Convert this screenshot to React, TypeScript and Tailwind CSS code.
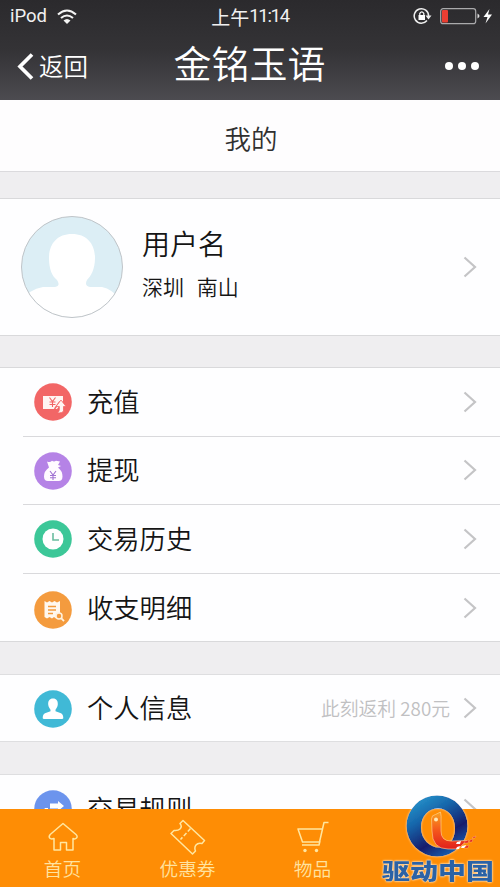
import type { ReactNode } from 'react';

const Chevron = () => (
  <svg className="mr-[23px] shrink-0" width="14" height="22" viewBox="0 0 14 22" fill="none" stroke="#c4c4c6" strokeWidth="2.2">
    <path d="M1.5 1.5 12 11 1.5 20.5" />
  </svg>
);

const Recharge = () => (
  <svg width="38" height="38" viewBox="0 0 38 38">
    <circle cx="19" cy="19" r="18.8" fill="#f26666" />
    <path d="M9 13h20v5l-6 8H9z" fill="#fff5f3" />
    <path d="m15.5 14.500 3 4 3-4M18.500 18.500V24M15.500 19h6M15.500 21.500h6" stroke="#f26666" strokeWidth="1.100" fill="none" />
    <path d="M20.500 26 26 18.500" stroke="#f26666" strokeWidth="1.400" />
    <path d="m27 17 5 6.500h-2.500V28q-1 2.300-6.500 1.800 2.500-1 2.300-3v-3.300H22z" fill="#fff5f3" stroke="#f26666" strokeWidth="0.800" />
  </svg>
);

const MoneyBag = () => (
  <svg width="38" height="38" viewBox="0 0 38 38">
    <circle cx="19" cy="19" r="18.800" fill="#b583e6" />
    <path d="M13 9.500q3 1.500 5-.8 2 1.600 4 0l4 .8-2 3.500 3 1-3 1.500q4.500 3.500 4.500 9 0 4.500-4 4.500H14q-4 0-4-4.500 0-5.500 5-9z" fill="#fffaff" />
    <path d="m16 19 3 4 3-4M19 23v5M16 23.500h6M16 25.700h6" stroke="#a273d3" strokeWidth="1.100" fill="none" />
  </svg>
);

const History = () => (
  <svg width="38" height="38" viewBox="0 0 38 38">
    <circle cx="19" cy="19" r="18.800" fill="#3cc798" />
    <circle cx="19" cy="19" r="10.500" fill="#fff" />
    <path d="M19 13v7h6" stroke="#6bbda0" strokeWidth="1.600" fill="none" />
  </svg>
);

const Receipt = () => (
  <svg width="38" height="38" viewBox="0 0 38 38">
    <circle cx="19" cy="19" r="18.800" fill="#f49b3e" />
    <path d="m10.500 10 2.500 1.500L15.500 10l2.500 1.500 2.500-1.500 2.500 1.500 3-1.500v13.500l-4 4-2-1.500-2 1.500-2.500-1.500-2.500 1.500-2.500-1.500z" fill="#fff8ef" />
    <path d="M14 15.500h8M14 19h8M14 22.500h5" stroke="#f49b3e" strokeWidth="1.300" />
    <circle cx="25" cy="25" r="3" fill="#f49b3e" stroke="#fff2df" strokeWidth="1.500" />
    <path d="m27.200 27.200 2.800 3" stroke="#fff2df" strokeWidth="1.800" />
  </svg>
);

const Person = () => (
  <svg width="38" height="38" viewBox="0 0 38 38">
    <circle cx="19" cy="19" r="18.800" fill="#40b9d6" />
    <path d="M19 8.500c3.500 0 5 2.500 4.800 6-.2 2.500-1.500 4-2.300 5.200v1.500l5.500 2q2.300 1 2.300 5-.3.800-1.300.8H10q-1 0-1.300-.8 0-4 2.300-5l5.500-2v-1.500c-.8-1.200-2.100-2.700-2.300-5.200-.2-3.500 1.300-6 4.800-6z" fill="#fff" />
  </svg>
);

const Rules = () => (
  <svg width="38" height="38" viewBox="0 0 38 38">
    <circle cx="19" cy="19" r="18.800" fill="#6c94ed" />
    <path d="M16 13.500h8V11l6 5-6 5v-2.500h-8zM11 18h3v2.500h8V25h-8v2.500l-6-5z" fill="#fff" />
  </svg>
);

function Row({ icon, label, note, offset = '' }: { icon: ReactNode; label: string; note?: string; offset?: string }) {
  return (
    <div className="flex h-full items-center">
      <span className={`w-[38px] shrink-0 ${offset}`}>{icon}</span>
      <span className="ml-[15px] flex-1 pb-[2px] text-[26.300px] leading-[38px] text-[#151515]">{label}</span>
      {note && <span className="mr-[13px] text-[18.800px] leading-none text-[#c0c0c2]">{note}</span>}
      <Chevron />
    </div>
  );
}

const actions = [
  { label: '充值', icon: <Recharge />, offset: '' },
  { label: '提现', icon: <MoneyBag />, offset: 'pt-px' },
  { label: '交易历史', icon: <History />, offset: 'pt-px' },
  { label: '收支明细', icon: <Receipt />, offset: 'pt-1' },
];

const Home = () => (
  <svg width="32" height="30" viewBox="0 0 32 30" fill="none" stroke="#ffe6a0" strokeWidth="1.500" strokeLinejoin="round">
    <path d="M16 1.500 29 12.500q2 2 .5 3.500-1.500 1.500-3.500.5V28h-6.500v-7.500h-6V28H7V16.500q-3 1-4.300-.5-1.200-1.500.5-3.500z" />
  </svg>
);

const Ticket = () => (
  <svg width="36" height="36" viewBox="0 0 36 36" fill="none" stroke="#ffe6a0" strokeWidth="1.500" strokeLinejoin="round">
    <path d="m13 1.500 21.500 20-2.500 3q-4-1-6 1.500-2 2.500-.5 6l-3 3L1 14.500l3-3q4 .5 6-1.500Q12.500 7.500 10 4.500z" />
    <path d="m20.500 9.500-10 11" strokeDasharray="4 2" />
  </svg>
);

const Cart = () => (
  <svg width="34" height="34" viewBox="0 0 34 34" fill="none" stroke="#ffe6a0" strokeWidth="1.500">
    <path d="M32.500 2.500h-4.500l-4.500 19.500H6.500L2 9h24.500M6 25h17l1-4" strokeLinejoin="round" />
    <circle cx="9" cy="30.500" r="1.700" fill="#ffe6a0" stroke="none" />
    <circle cx="20.500" cy="30.500" r="1.700" fill="#ffe6a0" stroke="none" />
  </svg>
);

const tabs = [
  { label: '首页', icon: <Home /> },
  { label: '优惠券', icon: <Ticket /> },
  { label: '物品', icon: <Cart /> },
];

function Brand() {
  return (
    <div className="absolute right-0 bottom-0 h-[96px] w-[124px]">
      <svg width="124" height="96" viewBox="376 791 124 96">
        <defs>
          <linearGradient id="ring" x1="0" y1="0" x2="0.600" y2="1">
            <stop offset="0" stopColor="#2aa3d6" />
            <stop offset="0.400" stopColor="#1766ab" />
            <stop offset="0.750" stopColor="#151d6c" />
            <stop offset="1" stopColor="#1658a8" />
          </linearGradient>
          <linearGradient id="bird" x1="0" y1="0" x2="0" y2="1">
            <stop offset="0" stopColor="#f9a321" />
            <stop offset="0.500" stopColor="#f4561c" />
            <stop offset="1" stopColor="#e1201c" />
          </linearGradient>
          <filter id="glow" x="-20%" y="-20%" width="140%" height="140%">
            <feDropShadow dx="0" dy="0" stdDeviation="1.300" floodColor="#fff" floodOpacity="0.700" />
          </filter>
        </defs>
        <path filter="url(#glow)" fillRule="evenodd" d="M437 795.500a30.500 30.500 0 1 0 .1 61 30.500 30.500 0 0 0-.1-61zm1 13c10 0 17 8 17 20s-7 19-16 19-18-8-18-20 8-19 17-19z" fill="url(#ring)" />
        <path d="M431.500 819q0-4 4-4.500l5-2.500q1 4 .5 9v10q0 10 10 10l16-.5-9 8.500H448q-16 0-16-18z" fill="url(#bird)" stroke="#ffd9a0" strokeWidth="0.600" />
        <circle cx="436" cy="819.500" r="2" fill="#ffe8b5" />
        <path d="m457 842 4-1-1 3h-4zm5 4 4-1-1 3h-4zm-5 1 3-1-1 3h-3z" fill="#fff" />
        <path d="m465 841 4-1-1 3h-4zm5-1 3-1-1 3h-3zm3-3 3-1-1 2h-3zm-7 9 3-1-1 3h-4z" fill="#e62c1d" stroke="#ffd9b0" strokeWidth="0.300" />
      </svg>
      <span className="absolute top-[69px] left-[6px] origin-top scale-y-[0.760] whitespace-nowrap text-[28px] leading-[26px] font-black text-[#2b62a5] [text-shadow:0_0_2px_#fff,0_0_3px_#ffe4bd]">驱动中国</span>
    </div>
  );
}

export default function App() {
  return (
    <div className="relative flex h-[887px] w-[500px] flex-col overflow-hidden bg-[#efeef0] font-['Noto_Sans_CJK_SC',sans-serif] font-[350] whitespace-nowrap">
      <header className="h-[100px] shrink-0 bg-linear-to-b from-[#2b2a2d] via-[#343336] to-[#4c4b50] text-white">
        <div className="grid h-8 grid-cols-3 items-center px-[10px] text-[#f1f1f1]">
          <div className="flex items-center gap-[10px]">
            <span className="font-[Roboto,sans-serif] text-[18.500px] leading-none font-normal">iPod</span>
            <svg width="20" height="15" viewBox="0 0 20 15" fill="none" stroke="#f4f4f4" strokeWidth="2.100">
              <path d="M1 5.500Q10-2.500 19 5.500M4 9q6-5 12 0" />
              <path d="M6.500 11.500q3.500-3 7 0L10 15z" fill="#f4f4f4" stroke="none" />
            </svg>
          </div>
          <div className="flex items-center justify-center text-[19px] leading-none font-normal">上午<span className="font-[Roboto,sans-serif] text-[18.500px] tracking-[-1.300px]">11:14</span></div>
          <div className="flex items-center justify-end">
            <svg className="-mr-[3px]" width="80" height="20" viewBox="0 0 80 20" fill="none">
              <path d="M14 14.500a7.200 7.200 0 1 1 1.600-4.500" stroke="#eee" strokeWidth="1.500" />
              <path d="M12.500 9.500h6l-3 4z" fill="#eee" />
              <rect x="5.500" y="9" width="6.500" height="5" fill="#fff" />
              <path d="M6.800 9V7.300q2-3 4 0V9" stroke="#fff" strokeWidth="1.200" />
              <rect x="27.700" y="2.700" width="35" height="15" rx="2.500" stroke="#aaaaac" strokeWidth="1.200" />
              <rect x="29" y="4" width="6" height="12.500" rx="1" fill="#e93e32" />
              <path d="M64.500 7.500q4 2.500 0 5z" fill="#ddd" />
              <path d="m76.500 3-6 8h4l-2 6.500 6.500-9h-4z" fill="#fff" />
            </svg>
          </div>
        </div>
        <div className="grid h-[68px] grid-cols-3 pr-[21px] pl-[17px]">
          <div className="flex items-center gap-[5px] text-[24.500px]">
            <svg width="17" height="27" viewBox="0 0 17 27" fill="none" stroke="#fff" strokeWidth="3.700"><path d="M15 1.500 3 13.500l12 12" /></svg>
            <span className="leading-none">返回</span>
          </div>
          <h1 className="flex h-[60px] items-center justify-center pl-[3px] text-[38px] leading-none font-[350]">金铭玉语</h1>
          <div className="flex items-center justify-end gap-[5px]">
            <i className="size-2 rounded-full bg-white" /><i className="size-2 rounded-full bg-white" /><i className="size-2 rounded-full bg-white" />
          </div>
        </div>
      </header>
      <h2 className="flex h-[72px] shrink-0 items-center justify-center border-b border-[#dbdadd] bg-[#fefdfe] pt-[5px] pl-[2px] text-[26.500px] leading-none font-[350] text-[#303030]">我的</h2>
      <section className="mt-[26px] flex h-[138px] shrink-0 items-center border-y border-[#d9d9db] bg-[#fefeff] pl-[21px]">
        <svg width="102" height="102" viewBox="0 0 102 102">
          <defs><clipPath id="avatar"><circle cx="51" cy="51" r="50.500" /></clipPath></defs>
          <circle cx="51" cy="51" r="50.500" fill="#dceef5" />
          <path clipPath="url(#avatar)" d="M51 18c15 0 23 10 23 24 0 11-4 18-8 22q-3 6 3 7h12q10 2 19 13v18H0V86q8-13 22-15h12q6-1 2-7c-5-4-8-11-8-22 0-14 8-24 23-24z" fill="#fff" />
          <circle cx="51" cy="51" r="50.500" fill="none" stroke="#bfc4c8" />
        </svg>
        <div className="mb-[8px] ml-[19px] flex flex-1 flex-col gap-[19px] text-[#151515]">
          <span className="text-[28px] leading-[28px]">用户名</span>
          <span className="text-[21px] leading-[21px] [word-spacing:8px]">深圳 南山</span>
        </div>
        <Chevron />
      </section>
      <section className="mt-[31px] h-[275px] shrink-0 border-y border-[#d9d9db] bg-[#fefeff] pl-[23px]">
        {actions.map((a) => (
          <div key={a.label} className="h-[68.600px] border-b border-[#d9d9dc] pl-[11px] last:border-b-0">
            <Row {...a} />
          </div>
        ))}
      </section>
      <section className="mt-8 h-[68px] shrink-0 border-y border-[#dedee0] bg-[#fefeff] pl-[34px]">
        <Row icon={<Person />} label="个人信息" note="此刻返利 280元" offset="pt-px" />
      </section>
      <section className="mt-8 h-[35px] shrink-0 overflow-hidden border-t border-[#dedee0] bg-[#fefeff] pl-[34px]">
        <div className="h-[68px]"><Row icon={<Rules />} label="交易规则" /></div>
      </section>
      <nav className="flex h-[78px] shrink-0 bg-[#fe8d05] text-[#ffe3a0]">
        {tabs.map((t) => (
          <div key={t.label} className="flex w-[125px] flex-col items-center">
            <span className="flex h-[49px] items-center justify-center pt-[7px]">{t.icon}</span>
            <span className="text-[18.700px] leading-[20px]">{t.label}</span>
          </div>
        ))}
      </nav>
      <Brand />
    </div>
  );
}
